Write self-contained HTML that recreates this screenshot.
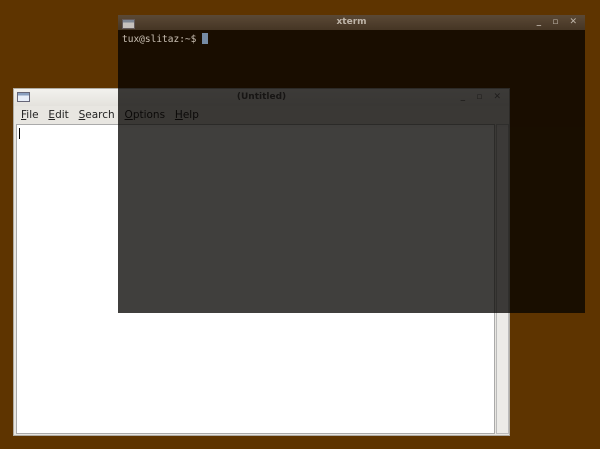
<!DOCTYPE html>
<html><head><style>
body{margin:0;width:600px;height:449px;background:#5e3400;position:relative;overflow:hidden;font-family:"DejaVu Sans","Liberation Sans",sans-serif}
.w{position:absolute}
#ed{left:13px;top:88px;width:497px;height:348px;background:#e8e6e1;border:1px solid #b0aca4;box-sizing:border-box}
#ed .tb{height:17px;background:linear-gradient(#f2f1ee,#e4e2dd);position:relative;font-size:9px;font-weight:bold;color:#555;text-align:center;line-height:17px}
#ed .menu{height:17px;font-size:10.5px;line-height:18px;color:#222;padding-left:7px;word-spacing:-1px}
#ed .menu span{margin-right:7.5px}
#ed .txt{position:absolute;left:2px;top:35px;width:479px;height:310px;background:#fff;border:1px solid #aaa;box-sizing:border-box}
#ed .sb{position:absolute;left:482px;top:35px;width:13px;height:310px;background:#ecebe8;border:1px solid #bbb;box-sizing:border-box}
#xt{left:118px;top:15px;width:467px;height:298px;opacity:0.76}
#xt .tb{height:15px;background:linear-gradient(#5a5048,#3e3630);color:#ddd;font-size:9px;font-weight:bold;text-align:center;line-height:15px;position:relative}
#xt .body{height:283px;background:#040200;font-family:"DejaVu Sans Mono","Liberation Mono",monospace;font-size:9.5px;color:#e8e8e8;padding:3px 4px;box-sizing:border-box}
.ico{position:absolute;left:4px;top:4px;width:11px;height:8px;background:linear-gradient(#8aa0c0 0 30%,#e8eef8 30%);border:1px solid #667}
.btns{position:absolute;right:4px;top:0;font-size:9px;letter-spacing:4px}
</style></head><body>
<div class="w" id="ed">
 <div class="tb"><div class="ico" style="left:3px;top:3px"></div>(Untitled)<span class="btns" style="color:#777">_ ▫ ✕</span></div>
 <div class="menu"><span><u>F</u>ile</span> <span><u>E</u>dit</span> <span><u>S</u>earch</span> <span><u>O</u>ptions</span> <span><u>H</u>elp</span></div>
 <div class="txt"><div style="position:absolute;left:2px;top:3px;width:1px;height:11px;background:#000"></div></div>
 <div class="sb"></div>
</div>
<div class="w" id="xt">
 <div class="tb"><div class="ico"></div>xterm<span class="btns">_ ▫ ✕</span></div>
 <div class="body">tux@slitaz:~$ <span style="display:inline-block;width:6px;height:11px;background:#7da6d8;vertical-align:-2px"></span></div>
</div>
</body></html>
